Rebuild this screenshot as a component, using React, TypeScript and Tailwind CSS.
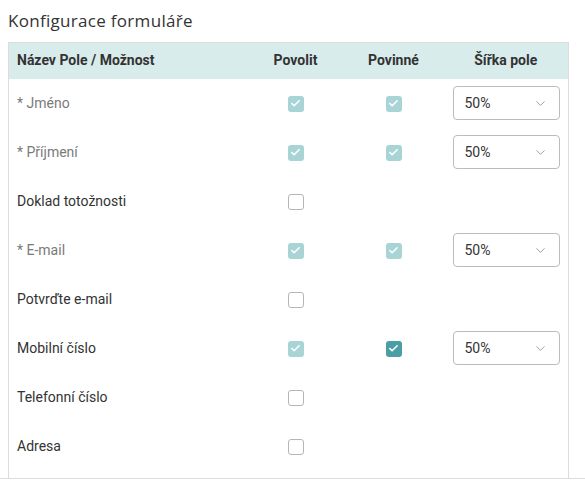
import { ChevronDown, Check } from 'lucide-react';

type Row = { label: string; required?: boolean; enable: 'on' | 'off'; mandatory?: 'lock' | 'on'; width?: string };

// form fields as shown in the config table
const ROWS: Row[] = [
  { label: 'Jméno', required: true, enable: 'on', mandatory: 'lock', width: '50%' },
  { label: 'Příjmení', required: true, enable: 'on', mandatory: 'lock', width: '50%' },
  { label: 'Doklad totožnosti', enable: 'off' },
  { label: 'E-mail', required: true, enable: 'on', mandatory: 'lock', width: '50%' },
  { label: 'Potvrďte e-mail', enable: 'off' },
  { label: 'Mobilní číslo', enable: 'on', mandatory: 'on', width: '50%' },
  { label: 'Telefonní číslo', enable: 'off' },
  { label: 'Adresa', enable: 'off' },
];

function Box({ state }: { state: 'lock' | 'on' | 'off' }) {
  if (state === 'off') {
    return <span className="inline-block w-4 h-4 rounded-[3px] border border-[#b5b5b5] bg-white align-middle" />;
  }
  return (
    <span
      className={`inline-flex w-4 h-4 rounded-[3px] items-center justify-center align-middle ${
        state === 'lock' ? 'bg-[#a9d4d6]' : 'bg-[#4b9ea4]'
      }`}
    >
      <Check size={11} strokeWidth={3.5} className="text-white" />
    </span>
  );
}

export default function App() {
  return (
    <div className="h-[479px] overflow-hidden border-b border-[#dcdcdc] bg-white px-2 pt-[10px]" style={{ fontFamily: 'Roboto, sans-serif' }}>
      <h2 className="text-[17px] leading-[22px] font-medium text-[#333] mb-[10px] tracking-[0.3px]" style={{ fontFamily: '"Open Sans", sans-serif' }}>
        Konfigurace formuláře
      </h2>
      <table className="w-[560px] border-collapse border-x border-[#dcdcdc] table-fixed">
        <colgroup>
          <col className="w-[239px]" />
          <col className="w-[96px]" />
          <col className="w-[100px]" />
          <col className="w-[125px]" />
        </colgroup>
        <thead>
          <tr className="h-9 bg-[#d9ecec] border-t border-[#dcdcdc] text-[14px] font-bold text-[#333]">
            <th className="text-left pl-2 font-bold">Název Pole / Možnost</th>
            <th className="text-center font-bold">Povolit</th>
            <th className="text-center font-bold">Povinné</th>
            <th className="text-center font-bold">Šířka pole</th>
          </tr>
        </thead>
        <tbody>
          {ROWS.map((r) => (
            <tr key={r.label} className="h-[49px] text-[14px]">
              <td className={`pl-2 ${r.required ? 'text-[#7a7a7a]' : 'text-[#333]'}`}>
                {r.required ? `* ${r.label}` : r.label}
              </td>
              <td className="text-center">
                <Box state={r.enable === 'on' ? 'lock' : 'off'} />
              </td>
              <td className="text-center">{r.mandatory && <Box state={r.mandatory} />}</td>
              <td className="pl-[9px] pr-[8px]">
                {r.width && (
                  <div className="h-[34px] border border-[#bcbcbc] rounded-[4px] flex items-center justify-between pl-[11px] pr-[11px] text-[#333]">
                    <span>{r.width}</span>
                    <ChevronDown size={15} strokeWidth={1.5} className="text-[#999]" />
                  </div>
                )}
              </td>
            </tr>
          ))}
          {/* next row, only its select's top edge peeks out above the fold */}
          <tr className="h-[49px]">
            <td />
            <td />
            <td />
            <td className="pl-[9px] pr-[8px]">
              <div className="h-[34px] border border-[#bcbcbc] rounded-[4px]" />
            </td>
          </tr>
        </tbody>
      </table>
    </div>
  );
}
